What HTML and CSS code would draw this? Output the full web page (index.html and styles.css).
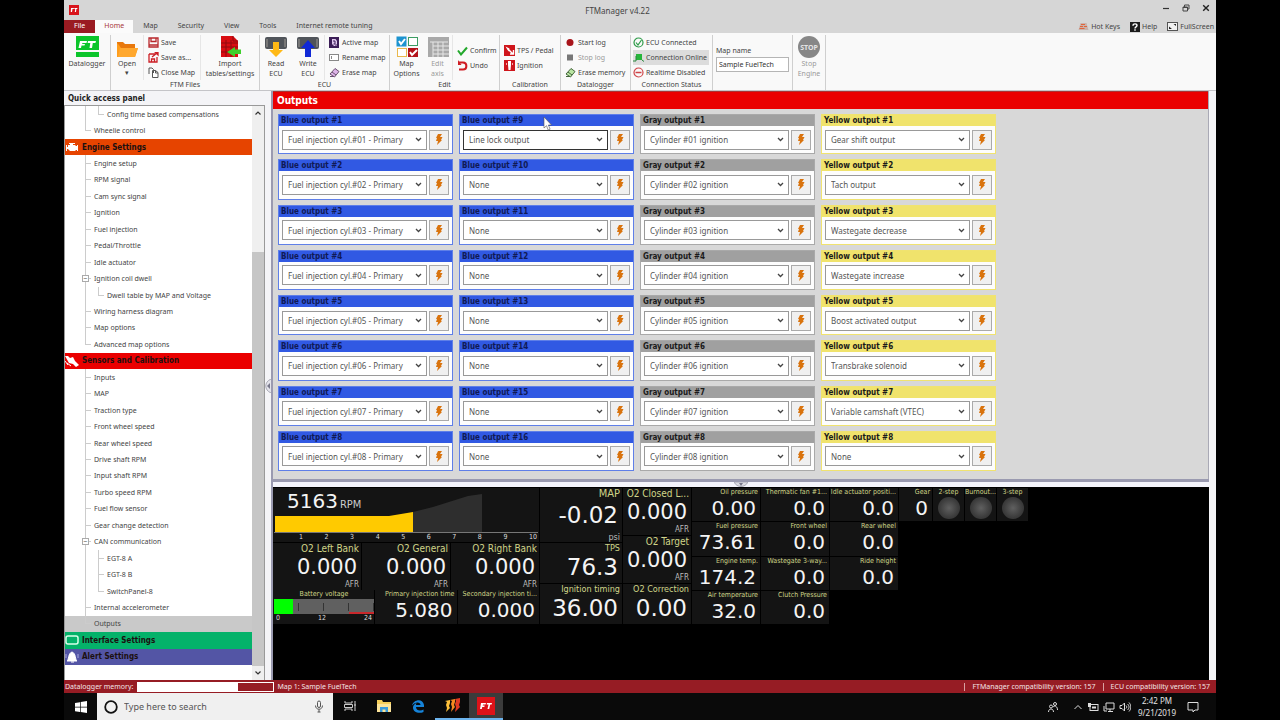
FILE: index.html
```html
<!DOCTYPE html>
<html lang="en">
<head>
<meta charset="UTF-8" />
<meta name="viewport" content="width=device-width, initial-scale=1" />
<title>FTManager v4.22</title>
<link rel="stylesheet" href="styles.css">
</head>
<body>

<div class="window">
  <header class="titlebar">
    <svg class="app-logo" width="10" height="10" viewBox="0 0 10 10"><rect width="10" height="10" fill="#d9141c"/><path d="M2 3h3l-.3 1H3.5L3 7H1.800zM5.500 3h3l-.3 1h-.8L7 7H5.800l.4-3h-1z" fill="#fff"/></svg>
    <h1>FTManager v4.22</h1>
    <div class="window-buttons">
      <button aria-label="Minimize"><svg width="8" height="8" viewBox="0 0 8 8"><path d="M1 4.500h6" stroke="#333" stroke-width="1.200"/></svg></button>
      <button aria-label="Restore"><svg width="8" height="8" viewBox="0 0 8 8" fill="none" stroke="#444"><path d="M1 3h4.500v4H1zM2.500 3V1h4.500v4H5.500M1 3.500h4.500"/></svg></button>
      <button aria-label="Close"><svg width="8" height="8" viewBox="0 0 8 8"><path d="M1.200 1.200l5.600 5.600M6.800 1.200L1.200 6.800" stroke="#222" stroke-width="1.400"/></svg></button>
    </div>
  </header>

  <nav class="tabs">
    <a href="#" class="tab file">File</a>
    <a href="#" class="tab active">Home</a>
    <a href="#" class="tab">Map</a>
    <a href="#" class="tab">Security</a>
    <a href="#" class="tab">View</a>
    <a href="#" class="tab">Tools</a>
    <a href="#" class="tab">Internet remote tuning</a>
    <div class="tools">
      <a href="#"><svg width="11" height="9" viewBox="0 0 11 9"><path d="M2.500 1h6l2 7h-10z" fill="#c9b3ac"/><path d="M3 2.500h4M2 4.500h3M6 4.500h3M1.500 6.500h5" stroke="#e0653c" stroke-width="1.200"/></svg>Hot Keys</a>
      <a href="#"><svg width="10" height="10" viewBox="0 0 10 10"><rect width="10" height="10" fill="#1b1b1b"/><path d="M3 3.800c0-2.600 4-2.400 4-.2C7 5 5 4.800 5 6.500M5 7.300v1.400" stroke="#fff" stroke-width="1.400" fill="none"/></svg>Help</a>
      <a href="#"><svg width="11" height="9" viewBox="0 0 11 9"><rect x=".5" y=".5" width="10" height="8" fill="#f2f2f2" stroke="#555"/><path d="M2 7h3L2 4.500zM9 2H6.500L9 4z" fill="#222"/></svg>FullScreen</a>
    </div>
  </nav>

  <section class="ribbon">
    <div class="group g-datalogger">
      <div class="items">
        <button class="big"><svg width="24" height="24" viewBox="0 0 24 24"><rect x="1" y="1" width="23" height="14" fill="#0cc52b"/><rect x="1" y="17" width="23" height="5" fill="#0cc52b"/><path d="M5 6h7l-.5 2H7.500L7 9h3l-.5 1.500H6.500L6 13H3.500zM13 6h8l-.6 2h-2.600L17 13h-2.500l.8-5h-2.700z" fill="#fff"/></svg><span>Datalogger</span></button>
      </div>
    </div>

    <div class="group g-files">
      <div class="items">
        <button class="big"><svg width="24" height="24" viewBox="0 0 24 24"><path d="M2 7h6l2 2h10v4H2z" fill="#e8780c"/><path d="M2 22V8l2 2 2 3h17l-3 9z" fill="#ff9d1c"/><path d="M5 13h18l-3 9H3z" fill="#ffa82f"/></svg><span>Open</span><small>▾</small></button>
        <div class="stack">
          <button><svg width="11" height="11" viewBox="0 0 11 11" fill="none" stroke="#b8282c"><path d="M1 1h9v9H1zM3 1v3.500h5V1M1 8h9" stroke-width="1.300"/></svg>Save</button>
          <button><svg width="11" height="11" viewBox="0 0 11 11" fill="none" stroke="#cc1f26" stroke-width="1.300"><path d="M1 2h7M1 2v8h8V5M3.500 10V7h3v3M4 5l5-4"/><path d="M7 0h3v3z" fill="#cc1f26"/></svg>Save as...</button>
          <button><svg width="11" height="11" viewBox="0 0 11 11" fill="#fff" stroke="#555"><path d="M1 1h3l1.500 1.500V6M1 1v6M4.500 3.500h3l2.500 2v5H4.500zM7.500 3.500V6H10"/></svg>Close Map</button>
        </div>
        <button class="big"><svg width="24" height="24" viewBox="0 0 24 24"><path d="M3 1h12l5 5v16H3z" fill="#d90d12"/><path d="M15 1v5h5M3 8h17M3 12h17M3 17h17M8 5v17M13 5v17" stroke="#8f0a0e" fill="none"/><path d="M23 14.500h-6V12l-8 5 8 5v-3h6z" fill="#3fd02c"/></svg><span>Import<br>tables/settings</span></button>
      </div>
      <div class="caption">FTM Files</div>
    </div>

    <div class="group g-ecu">
      <div class="items">
        <button class="big"><svg width="24" height="24" viewBox="0 0 24 24"><rect x="1" y="2" width="22" height="12" rx="2" fill="#50545a"/><path d="M3 4v8M21 4v8" stroke="#777" stroke-width="2"/><path d="M9 7h6v8h4l-7 7-7-7h4z" fill="#ffb916"/></svg><span>Read<br>ECU</span></button>
        <button class="big"><svg width="24" height="24" viewBox="0 0 24 24"><rect x="1" y="2" width="22" height="12" rx="2" fill="#50545a"/><path d="M3 4v8M21 4v8" stroke="#777" stroke-width="2"/><path d="M9 22h6v-9h4l-7-8-7 8h4z" fill="#1029d6"/></svg><span>Write<br>ECU</span></button>
        <div class="stack">
          <button><svg width="11" height="11" viewBox="0 0 11 11"><rect width="10" height="11" fill="#3b1d57"/><path d="M3 2h3.500L8 4v5H5L3 7z" fill="#e0c8ee"/><path d="M4 4h2v3H4.500M7 7v2" stroke="#3b1d57" fill="none"/></svg>Active map</button>
          <button><svg width="11" height="9" viewBox="0 0 11 9" fill="#fff" stroke="#888"><rect x=".5" y="1.500" width="9" height="6"/><path d="M2.500 3v3"/></svg>Rename map</button>
          <button><svg width="11" height="11" viewBox="0 0 11 11"><path d="M1 7l5-5.500 4 3L5.500 10z" fill="#ddb3e8" stroke="#6a5270"/><path d="M3 5l4 3M1 9.500h4" stroke="#6a5270"/></svg>Erase map</button>
        </div>
      </div>
      <div class="caption">ECU</div>
    </div>

    <div class="group g-edit">
      <div class="items">
        <button class="big"><svg width="24" height="24" viewBox="0 0 24 24"><rect x="2" y="2" width="9" height="9" fill="#1c93cf" stroke="#1c93cf"/><rect x="13.500" y="2.500" width="9" height="8" fill="#fff" stroke="#3c9d63"/><rect x="2.500" y="13.500" width="9" height="8" fill="#fff" stroke="#e9b84c"/><rect x="13" y="13" width="10" height="9" fill="#b3121a"/><path d="M4 6l2 3 4-5M15 17l2 3 5-5" stroke="#fff" stroke-width="2" fill="none"/></svg><span>Map<br>Options</span></button>
        <button class="big" disabled><svg width="24" height="24" viewBox="0 0 24 24"><rect x="2" y="2" width="21" height="20" fill="#a9a9a9"/><path d="M4 7h18M7 11h16M7 15h16M7 19h16M7 7v15M12 7v15M17 7v15" stroke="#e6e6e6"/></svg><span>Edit<br>axis</span></button>
        <div class="stack">
          <button><svg width="11" height="11" viewBox="0 0 11 11"><path d="M1 5.500l3 4 6-7" stroke="#23a82c" stroke-width="2" fill="none"/></svg>Confirm</button>
          <button><svg width="11" height="11" viewBox="0 0 11 11"><path d="M2 2.500h4c4.500 0 4.500 7 0 7H2" stroke="#cf1d24" stroke-width="2" fill="none"/><path d="M1 0v5h3.500z" fill="#cf1d24"/></svg>Undo</button>
        </div>
      </div>
      <div class="caption">Edit</div>
    </div>

    <div class="group g-calibration">
      <div class="items">
        <div class="stack">
          <button><svg width="11" height="11" viewBox="0 0 11 11"><rect width="11" height="11" fill="#cf151b"/><path d="M1.500 1.500l4 2-1 3z" fill="#fff"/><path d="M4 4l5 5M6 9h3.500V5" stroke="#fff" stroke-width="1.400" fill="none"/></svg>TPS / Pedal</button>
          <button><svg width="11" height="11" viewBox="0 0 11 11"><rect width="11" height="11" fill="#cf151b"/><path d="M4 1h3v4l-.5 5h-2L4 5z" fill="#fff"/><path d="M2.500 3v2M8.500 3v2" stroke="#f3a9ab"/></svg>Ignition</button>
        </div>
      </div>
      <div class="caption">Calibration</div>
    </div>

    <div class="group g-log">
      <div class="items">
        <div class="stack">
          <button><svg width="11" height="11" viewBox="0 0 11 11"><circle cx="5" cy="5.500" r="3.500" fill="#a8141a"/></svg>Start log</button>
          <button disabled><svg width="11" height="11" viewBox="0 0 11 11"><rect x="2" y="2.500" width="6" height="6" fill="#777"/></svg>Stop log</button>
          <button><svg width="11" height="11" viewBox="0 0 11 11"><path d="M1 7l5-5.500 4 3L5.500 10z" fill="#b9e5a3" stroke="#44663b"/><path d="M3 5l4 3M1 9.500h4" stroke="#44663b"/></svg>Erase memory</button>
        </div>
      </div>
      <div class="caption">Datalogger</div>
    </div>

    <div class="group g-status">
      <div class="items">
        <div class="stack">
          <button><svg width="11" height="11" viewBox="0 0 11 11" fill="none" stroke="#2b9a46"><circle cx="5.500" cy="5.500" r="4.500" stroke-width="1.200"/><path d="M3 5.500l2 2.500 3.500-5" stroke-width="1.200"/></svg>ECU Connected</button>
          <button class="pressed"><svg width="11" height="9" viewBox="0 0 11 9"><path d="M3 1h6v6H3z" fill="#27b53c"/><path d="M0 8h3V3M9 7l2 1.500" stroke="#27863a" fill="none"/></svg>Connection Online</button>
          <button><svg width="11" height="11" viewBox="0 0 11 11" fill="none" stroke="#cf4448"><circle cx="5.500" cy="5.500" r="4.500" stroke-width="1.200"/><path d="M2.500 5.500h6" stroke-width="1.500"/></svg>Realtime Disabled</button>
        </div>
      </div>
      <div class="caption">Connection Status</div>
    </div>

    <div class="group g-map">
      <label for="mapName">Map name</label>
      <input type="text" id="mapName" value="Sample FuelTech">
    </div>

    <div class="group g-stop">
      <div class="items">
        <button class="big" disabled><svg width="24" height="24" viewBox="0 0 24 24"><circle cx="12" cy="12" r="11" fill="#878787"/><text x="12" y="15" class="stop-text">STOP</text></svg><span>Stop<br>Engine</span></button>
      </div>
    </div>
  </section>

  <main class="workspace">
    <aside class="sidebar">
      <h2>Quick access panel</h2>
      <div class="tree-box">
        <ul class="tree">
          <li class="sub last more"><a href="#">Config time based compensations</a></li>
          <li class="last"><a href="#">Wheelie control</a></li>
          <li class="section engine"><svg width="14" height="12" viewBox="0 0 14 12"><path d="M1 4h1v2h1V4h2V3H4V2h6v1H8v1h2l1 1h1V4h1v6h-1V9h-1l-1 1H5L3 8H2v2H1z" fill="#fff"/></svg><a href="#">Engine Settings</a></li>
          <li><a href="#">Engine setup</a></li>
          <li><a href="#">RPM signal</a></li>
          <li><a href="#">Cam sync signal</a></li>
          <li><a href="#">Ignition</a></li>
          <li><a href="#">Fuel injection</a></li>
          <li><a href="#">Pedal/Throttle</a></li>
          <li><a href="#">Idle actuator</a></li>
          <li class="open"><a href="#">Ignition coil dwell</a></li>
          <li class="sub last more"><a href="#">Dwell table by MAP and Voltage</a></li>
          <li><a href="#">Wiring harness diagram</a></li>
          <li><a href="#">Map options</a></li>
          <li class="last"><a href="#">Advanced map options</a></li>
          <li class="section sensors"><svg width="14" height="12" viewBox="0 0 14 12"><path d="M0 1h3l2 2 3-1 2 4 4 4-3 2-3-3-4-1z" fill="#fff"/><path d="M0 6l3 4M2 8l4 3" stroke="#fff"/></svg><a href="#">Sensors and Calibration</a></li>
          <li><a href="#">Inputs</a></li>
          <li><a href="#">MAP</a></li>
          <li><a href="#">Traction type</a></li>
          <li><a href="#">Front wheel speed</a></li>
          <li><a href="#">Rear wheel speed</a></li>
          <li><a href="#">Drive shaft RPM</a></li>
          <li><a href="#">Input shaft RPM</a></li>
          <li><a href="#">Turbo speed RPM</a></li>
          <li><a href="#">Fuel flow sensor</a></li>
          <li><a href="#">Gear change detection</a></li>
          <li class="open"><a href="#">CAN communication</a></li>
          <li class="sub more"><a href="#">EGT-8 A</a></li>
          <li class="sub more"><a href="#">EGT-8 B</a></li>
          <li class="sub last more"><a href="#">SwitchPanel-8</a></li>
          <li><a href="#">Internal accelerometer</a></li>
          <li class="last selected"><a href="#">Outputs</a></li>
          <li class="section interface"><svg width="14" height="12" viewBox="0 0 14 12"><rect x="1" y="2" width="12" height="8" rx="2" fill="none" stroke="#d8ffe9" stroke-width="1.500"/></svg><a href="#">Interface Settings</a></li>
          <li class="section alert"><svg width="14" height="12" viewBox="0 0 14 12"><path d="M2 10c2-1 1-8 5-9 4 1 3 8 5 9zM6 11h3" fill="#fff" stroke="#fff"/><path d="M1 3v4M13 3v4" stroke="#a9a9e0"/></svg><a href="#">Alert Settings</a></li>
        </ul>
        <div class="scrollbar">
          <svg width="8" height="6" viewBox="0 0 8 6"><path d="M1.500 4.500L4 2l2.500 2.500" fill="none" stroke="#333" stroke-width="1.200"/></svg>
          <div class="thumb"></div>
          <svg width="8" height="6" viewBox="0 0 8 6"><path d="M1.500 1.500L4 4l2.500-2.500" fill="none" stroke="#333" stroke-width="1.200"/></svg>
        </div>
      </div>
    </aside>
    <div class="splitter"><svg width="6" height="14" viewBox="0 0 6 14"><path d="M6 0C-1 3-1 11 6 14" fill="#e3e3ea" stroke="#a9a9b5"/><path d="M5 4L2 7l3 3z" fill="#77778a"/></svg></div>

    <div class="content">
      <section class="outputs">
        <h2>Outputs</h2>
        <div class="outputs-grid" id="outputs"></div>
        <svg class="cursor" width="9" height="15" viewBox="0 0 9 15"><path d="M1 1v11l2.500-2.300L5.200 14l1.900-.8L5.400 9H8.500z" fill="#fff" stroke="#555" stroke-width=".6"/></svg>
      </section>
      <div class="hsplit"><svg width="14" height="5" viewBox="0 0 14 5"><path d="M0 0c3 6 11 6 14 0z" fill="#dcdce2" stroke="#a9a9b5"/><path d="M5 1h4L7 4z" fill="#77778a"/></svg></div>

      <section class="dash">
        <div class="col col-main">
          <div class="tile rpm">
            <div class="rpm-value"><strong>5163</strong><span>RPM</span></div>
            <svg class="rpm-graph" viewBox="0 0 266 54" preserveAspectRatio="none"><path d="M140 24L160 19 195 8 209 6v38h-69z" fill="#2e2e2e"/><path d="M2 28h114l24-4v20H2z" fill="#ffca00"/><path d="M1 44.500h264" stroke="#777"/></svg>
            <div class="scale"><span>1</span><span>2</span><span>3</span><span>4</span><span>5</span><span>6</span><span>7</span><span>8</span><span>9</span><span>10</span></div>
          </div>
          <div class="row three">
            <div class="tile mid"><h3>O2 Left Bank</h3><b>0.000</b><i>AFR</i></div>
            <div class="tile mid"><h3>O2 General</h3><b>0.000</b><i>AFR</i></div>
            <div class="tile mid"><h3>O2 Right Bank</h3><b>0.000</b><i>AFR</i></div>
          </div>
          <div class="row battery-row">
            <div class="tile battery">
              <h3>Battery voltage</h3>
              <div class="gauge"><div class="level" style="width: 19%"></div></div>
              <div class="ends"><span>0</span><span>12</span><span>24</span></div>
            </div>
            <div class="tile small"><h3>Primary injection time</h3><b>5.080</b></div>
            <div class="tile small"><h3>Secondary injection ti...</h3><b>0.000</b></div>
          </div>
        </div>
        <div class="col col-map">
          <div class="tile large"><h3>MAP</h3><b>-0.02</b><i>psi</i></div>
          <div class="tile large tps"><h3>TPS</h3><b>76.3</b></div>
          <div class="tile large timing"><h3>Ignition timing</h3><b>36.00</b></div>
        </div>
        <div class="col col-o2">
          <div class="tile mid"><h3>O2 Closed L...</h3><b>0.000</b><i>AFR</i></div>
          <div class="tile mid"><h3>O2 Target</h3><b>0.000</b><i>AFR</i></div>
          <div class="tile large timing"><h3>O2 Correction</h3><b>0.00</b></div>
        </div>
        <div class="col col-small">
          <div class="tile small"><h3>Oil pressure</h3><b>0.00</b></div>
          <div class="tile small"><h3>Fuel pressure</h3><b>73.61</b></div>
          <div class="tile small"><h3>Engine temp.</h3><b>174.2</b></div>
          <div class="tile small"><h3>Air temperature</h3><b>32.0</b></div>
        </div>
        <div class="col col-small">
          <div class="tile small"><h3>Thermatic fan #1...</h3><b>0.0</b></div>
          <div class="tile small"><h3>Front wheel</h3><b>0.0</b></div>
          <div class="tile small"><h3>Wastegate 3-way...</h3><b>0.0</b></div>
          <div class="tile small"><h3>Clutch Pressure</h3><b>0.0</b></div>
        </div>
        <div class="col col-small">
          <div class="tile small"><h3>Idle actuator positi...</h3><b>0.0</b></div>
          <div class="tile small"><h3>Rear wheel</h3><b>0.0</b></div>
          <div class="tile small"><h3>Ride height</h3><b>0.0</b></div>
        </div>
        <div class="col col-small col-gear"><div class="tile small"><h3>Gear</h3><b>0</b></div></div>
        <div class="col col-small col-lamp"><div class="tile small lamp"><h3>2-step</h3><div class="led"></div></div></div>
        <div class="col col-small col-lamp"><div class="tile small lamp"><h3>Burnout...</h3><div class="led"></div></div></div>
        <div class="col col-small col-lamp"><div class="tile small lamp"><h3>3-step</h3><div class="led"></div></div></div>
      </section>
    </div>
  </main>

  <footer class="statusbar">
    <label for="memory">Datalogger memory:</label>
    <progress id="memory" value="74" max="100"></progress>
    <span>Map 1: Sample FuelTech</span>
    <span class="version">FTManager compatibility version: 157</span>
    <span class="version">ECU compatibility version: 157</span>
  </footer>

  <div class="taskbar">
    <button class="start" aria-label="Start"><svg width="12" height="12" viewBox="0 0 12 12" fill="#fff"><path d="M0 2l5-.8v4.500H0zM5.700 1L12 0v5.700H5.700zM0 6.400h5v4.500L0 10.200zM5.700 6.400H12V12l-6.300-1z"/></svg></button>
    <div class="search">
      <svg width="14" height="14" viewBox="0 0 14 14"><circle cx="7" cy="7" r="5.800" fill="none" stroke="#111" stroke-width="1.800"/></svg>
      <input type="text" aria-label="Search" placeholder="Type here to search">
      <svg width="10" height="13" viewBox="0 0 10 13" fill="none" stroke="#555"><rect x="3.500" y="1" width="3" height="6.500" rx="1.500"/><path d="M1.500 5.500c0 5 7 5 7 0M5 9.500V12M3.500 12h3"/></svg>
    </div>
    <button class="app" aria-label="Task view"><svg width="14" height="12" viewBox="0 0 14 12" fill="none" stroke="#ccc"><path d="M2 1v2h7V1M2 11V9h7v2M1.500 4.500h8v3h-8zM12 1v10M11 5h2"/></svg></button>
    <button class="app" aria-label="File Explorer"><svg width="16" height="14" viewBox="0 0 16 14"><path d="M1 1h5l1 2h8v10H1z" fill="#f5cf5b"/><path d="M1 5h14v8H1z" fill="#fce49a"/><path d="M4 13V8h8v5h-2.500v-2.500h-3V13z" fill="#3a9bdc"/></svg></button>
    <button class="app" aria-label="Edge"><svg width="14" height="14" viewBox="0 0 14 14"><path d="M1 6.500C2 .5 12-1.500 13 6v2H5c0 4 5 4 7.500 2.500V13C8 15 2 13.500 2 8.500 2 6.500 3.500 5 5.500 4 5 5 5 5.500 5 6h4.500C9.500 2.500 4 2.500 1 6.500z" fill="#1683d8"/></svg></button>
    <button class="app running" aria-label="FuelTech"><svg width="16" height="16" viewBox="0 0 16 16"><path d="M1 3l5-1v3L5 8l1 2-4 4 1-4-1-3 1-3z" fill="#ffc13b"/><path d="M6 2l5-1v3l-1 3 1 2-4 5 1-5-1-3 1-3z" fill="#f78a20"/><path d="M11 1l5-1v4l-1 3 1 2-5 5 1-5-1-3 1-3z" fill="#e13a22"/></svg></button>
    <button class="app running current" aria-label="FTManager"><svg width="18" height="18" viewBox="0 0 18 18"><rect width="18" height="18" fill="#dd1219"/><path d="M4 6h5l-.4 1.500H6l-.3 1h2l-.4 1.500H5.200L4.800 12H3zM10 6h5l-.4 1.500h-1.400l-1 4.500h-1.700l1-4.500H9.700z" fill="#fff"/></svg></button>
    <div class="tray">
      <svg width="12" height="12" viewBox="0 0 12 12" fill="none" stroke="#ddd"><circle cx="8" cy="3" r="1.500"/><circle cx="4" cy="5.500" r="1.500"/><path d="M1.500 11c0-4 5-4 5 0M6 6c2-2 4.500-.5 4.500 3"/></svg>
      <svg class="up" width="10" height="10" viewBox="0 0 10 10" fill="none" stroke="#ddd"><path d="M1.500 7L5 3.500 8.500 7"/></svg>
      <svg width="12" height="12" viewBox="0 0 12 12"><rect x="3" y="3.500" width="8" height="6" fill="none" stroke="#ddd"/><path d="M5 5.500h4v2H5zM1 2h3v4H1z" fill="#ddd"/></svg>
      <svg width="12" height="12" viewBox="0 0 12 12" fill="none" stroke="#ddd"><path d="M3 2h8v6H3zM5 10.500h5M7 8v2M1 5v5h3"/></svg>
      <svg width="12" height="12" viewBox="0 0 12 12" fill="none" stroke="#ddd"><path d="M1 4.500h2L5.500 2v8L3 7.500H1zM7 4.500c1 1 1 2 0 3M8.500 3c2 2 2 4 0 6M10 1.500c2.500 3 2.500 6 0 9"/></svg>
      <div class="clock">2:42 PM<br>9/21/2019</div>
      <svg width="12" height="12" viewBox="0 0 12 12" fill="none" stroke="#ddd"><path d="M1 1.500h10v7.500H8L6 11V9H1z"/></svg>
    </div>
  </div>
</div>

<script src="script.js"></script>
</body>
</html>
```
FILE: script.js
```js
const columns = [
  { color: 'blue', name: 'Blue', first: 1, values: [1, 2, 3, 4, 5, 6, 7, 8].map(n => `Fuel injection cyl.#0${n} - Primary`) },
  { color: 'blue', name: 'Blue', first: 9, values: ['Line lock output', 'None', 'None', 'None', 'None', 'None', 'None', 'None'] },
  { color: 'gray', name: 'Gray', first: 1, values: [1, 2, 3, 4, 5, 6, 7, 8].map(n => `Cylinder #0${n} ignition`) },
  { color: 'yellow', name: 'Yellow', first: 1, values: [
    'Gear shift output', 'Tach output', 'Wastegate decrease', 'Wastegate increase',
    'Boost activated output', 'Transbrake solenoid', 'Variable camshaft (VTEC)', 'None'
  ] }
];

const bolt = '<svg width="8" height="11" viewBox="0 0 8 11"><path d="M3 0h4L5 3h2.500L6 6h1L2 11l1-4H1l1-3H1z" fill="#d9730d"/></svg>';
const grid = document.getElementById('outputs');

columns.forEach(col => {
  col.values.forEach((value, i) => {
    const number = col.first + i;
    const id = `${col.color}${number}`;
    const box = document.createElement('div');
    box.className = `output ${col.color}`;
    box.innerHTML = `
      <label for="${id}">${col.name} output #${number}</label>
      <div class="output-row">
        <select id="${id}"><option>${value}</option></select>
        <button aria-label="Test ${col.name} output #${number}">${bolt}</button>
      </div>`;
    grid.appendChild(box);
  });
});

document.getElementById('blue9').classList.add('focused');
```
FILE: styles.css
```css
* {
  box-sizing: border-box;
}

body {
  margin: 0;
  padding: 0 5%;
  background: #000;
  font-family: "Noto Sans", sans-serif;
  font-size: 7px;
  color: #444;
}

h1, h2, h3, ul {
  margin: 0;
  padding: 0;
  font-weight: normal;
}

a {
  color: inherit;
  text-decoration: none;
}

button {
  font: inherit;
  color: inherit;
  background: none;
  border: none;
  padding: 0;
}

svg {
  display: block;
  flex: none;
}

.window {
  display: flex;
  flex-direction: column;
  height: 100vh;
  background: #f4f4f7;
}

/* title bar and tabs */
.titlebar {
  display: flex;
  align-items: center;
  height: 20px;
  padding-left: 5px;
  background: #d6d6d6;
}

.titlebar h1 {
  flex: 1;
  text-align: center;
  font-size: 8px;
}

.window-buttons {
  display: flex;
  align-self: flex-start;
}

.window-buttons button {
  width: 20px;
  height: 15px;
  display: flex;
  align-items: center;
  justify-content: center;
}

.tabs {
  display: flex;
  height: 13px;
  line-height: 12px;
  background: #d6d6d6;
}

.tab {
  padding: 0 10px;
}

.tab.file {
  background: #9a1b22;
  color: #fff;
}

.tab.active {
  padding: 0 9px;
  background: #fbfbfb;
  color: #a8383c;
}

.tools {
  display: flex;
  gap: 10px;
  margin-left: auto;
  padding-right: 2px;
}

.tools a {
  display: flex;
  align-items: center;
  gap: 2px;
}

/* ribbon */
.ribbon {
  display: flex;
  height: 58px;
  padding-top: 2px;
  background: #f9f9f9;
  border-bottom: 1px solid #c4c4c8;
}

.group {
  display: flex;
  flex-direction: column;
  border-right: 1px solid #cfcfcf;
}

.items {
  flex: none;
  display: grid;
  height: 45px;
}

.caption {
  text-align: center;
  line-height: 10px;
}

.g-datalogger { width: 47px; }
.g-files { width: 149px; }
.g-ecu { width: 130px; }
.g-edit { width: 110px; }
.g-calibration { width: 61px; }
.g-log { width: 70px; }
.g-status { width: 82px; }
.g-map { width: 80px; }
.g-stop { width: 33px; }

.g-files .items { grid-template-columns: 32px 58px 58px; }
.g-ecu .items { grid-template-columns: 32px 32px 65px; }
.g-edit .items { grid-template-columns: 33px 29px 47px; }

.big {
  display: flex;
  flex-direction: column;
  align-items: center;
  line-height: 10px;
}

.big small {
  font-size: 7px;
  line-height: 8px;
}

button:disabled {
  color: #999;
}

.stack {
  display: flex;
  flex-direction: column;
  justify-content: center;
  padding-left: 4px;
  white-space: nowrap;
}

.g-files .stack,
.g-ecu .stack,
.g-edit .stack {
  border-left: 1px solid #e6e6e6;
}

.g-files .stack {
  border-right: 1px solid #e6e6e6;
}

.g-status .stack {
  padding: 0 3px 0 2px;
}

.stack button {
  display: flex;
  align-items: center;
  gap: 2px;
  height: 15px;
}

.stack .pressed {
  background: #dcdcdc;
}

.g-map {
  padding: 10px 3px;
}

.g-map label {
  line-height: 12px;
}

.g-map input {
  width: 100%;
  height: 15px;
  padding: 0 2px;
  border: 1px solid #b5b5b5;
  font: inherit;
  color: #333;
}

.stop-text {
  font-size: 7px;
  font-weight: bold;
  fill: #e4e4e4;
  text-anchor: middle;
}

/* workspace */
.workspace {
  display: flex;
  flex: 1;
  min-height: 0;
  padding-right: 7px;
}

.sidebar {
  display: flex;
  flex-direction: column;
  width: 201px;
}

.sidebar h2 {
  padding: 1px 0 0 4px;
  font: bold 8px/13px "DejaVu Sans Condensed", sans-serif;
  color: #222;
}

.tree-box {
  display: flex;
  flex: 1;
  border: 1px solid #999;
  border-bottom: none;
  background: #fff;
}

.tree {
  flex: 1;
  display: grid;
  grid-auto-rows: 1fr;
  margin-bottom: 15px;
  list-style: none;
}

.tree li {
  display: flex;
  align-items: center;
  padding-left: 29px;
  background-image: linear-gradient(#ccc, #ccc), linear-gradient(#ccc, #ccc);
  background-repeat: no-repeat;
  background-size: 1px 100%, 6px 1px;
  background-position: 20px 0, 20px 50%;
}

.tree li.last {
  background-size: 1px 50%, 6px 1px;
}

.tree li.sub {
  padding-left: 42px;
  background-image: linear-gradient(#ccc, #ccc), linear-gradient(#ccc, #ccc), linear-gradient(#ccc, #ccc);
  background-size: 1px 100%, 6px 1px, 1px 100%;
  background-position: 33px 0, 33px 50%, 20px 0;
}

.tree li.sub.last {
  background-size: 1px 50%, 6px 1px, 1px 100%;
}

.tree li.open::before {
  content: "−";
  box-sizing: border-box;
  width: 7px;
  height: 7px;
  margin: 0 5px 0 -12px;
  border: 1px solid #aaa;
  background: #fff;
  font-size: 7px;
  line-height: 5px;
  text-align: center;
}

.tree li.selected {
  background-color: #c9c9c9;
}

.tree li.section {
  gap: 3px;
  padding-left: 0;
  background-image: none;
  font: bold 8px "DejaVu Sans Condensed", sans-serif;
  color: #1c1010;
}

.tree li.engine { background-color: #e64400; }
.tree li.sensors { background-color: #ea0000; }
.tree li.interface { background-color: #04b26a; }
.tree li.alert { background-color: #5355a5; }

.scrollbar {
  display: flex;
  flex-direction: column;
  align-items: center;
  width: 12px;
  padding: 4px 0;
  background: #efefef;
}

.thumb {
  width: 12px;
  height: 414px;
  margin-top: auto;
  margin-bottom: 4px;
  background: #c6c6c6;
}

.splitter {
  display: flex;
  align-items: center;
  width: 8px;
  border-right: 2px solid #9a9ab0;
}

.content {
  display: flex;
  flex: 1;
  flex-direction: column;
  min-width: 0;
}

.outputs {
  position: relative;
  display: flex;
  flex: 1;
  flex-direction: column;
  border-right: 1px solid #a9a9b5;
  background: #d8d8d8;
}

.outputs h2 {
  padding-left: 4px;
  border-top: 1px solid #a33;
  background: #ea0000;
  color: #fff;
  font: bold 10px/17px "DejaVu Sans Condensed", sans-serif;
}

.outputs-grid {
  flex: 1;
  display: grid;
  grid-template-rows: repeat(8, 1fr);
  grid-auto-flow: column;
  grid-auto-columns: 175px;
  gap: 5px 6px;
  padding: 5px 5px 8px;
}

.output {
  display: flex;
  flex-direction: column;
  background: #fdfdfd;
  border: 1px solid;
}

.output.blue { border-color: #5f7fe8; }
.output.gray { border-color: #a9a9a9; }
.output.yellow { border-color: #f0e370; }

.output label {
  padding-left: 2px;
  font: bold 8px/11px "DejaVu Sans Condensed", sans-serif;
  color: #1a1a1a;
}

.blue label {
  background: #3159e3;
  color: #101a55;
}

.gray label { background: #a0a0a0; }
.yellow label { background: #f0e36c; }

.output-row {
  display: flex;
  flex: 1;
  align-items: center;
  gap: 2px;
  padding: 0 3px;
}

.output select {
  flex: 1;
  min-width: 0;
  height: 20px;
  padding: 0 5px;
  border: 1px solid #999;
  border-radius: 0;
  appearance: none;
  font: 8px "Noto Sans", sans-serif;
  color: #555;
  background: #fff url("data:image/svg+xml,%3Csvg xmlns='http://www.w3.org/2000/svg' width='7' height='5'%3E%3Cpath d='M1 1l2.500 2.500L6 1' fill='none' stroke='%23444' stroke-width='1.300'/%3E%3C/svg%3E") no-repeat right 4px center;
}

.output select.focused {
  border-color: #333;
}

.output button {
  display: flex;
  align-items: center;
  justify-content: center;
  width: 20px;
  height: 20px;
  border: 1px solid #aaa;
  background: #f0f0f0;
}

.cursor {
  position: absolute;
  left: 270px;
  top: 25px;
}

.hsplit {
  display: flex;
  justify-content: center;
  height: 8px;
  border-top: 3px solid #9a9ab0;
  background: #f4f4fb;
}

/* dashboard */
.dash {
  display: flex;
  align-items: flex-start;
  gap: 1px;
  height: 193px;
  padding-top: 1px;
  background: #000;
  font-family: "DejaVu Sans Condensed", sans-serif;
}

.col {
  display: grid;
  gap: 1px;
  height: 136px;
}

.col-main { width: 266px; grid-template-rows: 54px 46px 34px; }
.col-map { width: 82px; grid-template-rows: 54px 40px 40px; }
.col-o2 { width: 68px; grid-template-rows: 47px 47px 40px; }
.col-small { width: 68px; grid-template-rows: repeat(4, 1fr); }
.col-gear { width: 33px; }
.col-lamp { width: 31px; }

.row {
  display: grid;
  gap: 1px;
}

.three { grid-template-columns: repeat(3, 1fr); }
.battery-row { grid-template-columns: 101px 1fr 1fr; }

.tile {
  display: flex;
  flex-direction: column;
  align-items: flex-end;
  padding-right: 2px;
  background: #141414;
  white-space: nowrap;
}

.tile h3 {
  font-size: 10px;
  line-height: 12px;
  color: #d0d488;
}

.tile b {
  padding-right: 2px;
  font: 21px/25px "DejaVu Sans", sans-serif;
  color: #f4f4f4;
}

.tile i {
  margin-top: auto;
  font-size: 8px;
  line-height: 10px;
  font-style: normal;
  color: #bbb;
}

.large h3 { font-size: 11px; }
.large b { font-size: 23px; line-height: 30px; }
.large i { font-size: 9px; }

.timing h3,
.tps h3 {
  font-size: 9px;
  line-height: 11px;
}

.timing b,
.tps b {
  line-height: 26px;
}

.small h3,
.battery h3 {
  font-size: 7px;
  line-height: 9px;
}

.small b {
  font-size: 20px;
  line-height: 22px;
}

.lamp {
  align-items: center;
  padding-right: 0;
}

.led {
  width: 22px;
  height: 22px;
  border-radius: 50%;
  background: radial-gradient(#606060, #3c3c3c 60%, #2c2c2c);
}

/* graph and readout share one cell */
.rpm {
  display: grid;
  grid-template-rows: 45px 9px;
  align-items: start;
  padding: 0;
}

.rpm-graph {
  grid-area: 1 / 1 / 3 / 2;
  width: 100%;
  height: 54px;
}

.rpm-value {
  grid-area: 1 / 1;
  z-index: 1;
  display: flex;
  align-items: baseline;
  gap: 2px;
  padding-left: 14px;
  color: #f4f4f4;
}

.rpm-value strong {
  font: 20px/27px "DejaVu Sans", sans-serif;
}

.rpm-value span {
  font-size: 11px;
  color: #ccc;
}

.scale {
  grid-area: 2 / 1;
  display: flex;
  justify-content: space-between;
  padding: 0 2px 0 26px;
  font-size: 7px;
  line-height: 9px;
  color: #ddd;
}

.battery {
  align-items: stretch;
  padding: 0 0 0 1px;
}

.battery h3 {
  text-align: center;
}

.gauge {
  height: 15px;
  background: linear-gradient(90deg, transparent 75%, #c8282c 75%) bottom / 100% 2px no-repeat,
    repeating-linear-gradient(90deg, transparent 0 24px, #333 24px 25px) center / 100% 8px no-repeat, #606060;
}

.level {
  height: 15px;
  background: #0f0;
}

.ends {
  display: flex;
  justify-content: space-between;
  padding: 0 2px;
  font-size: 7px;
  line-height: 9px;
  color: #ddd;
}

/* status bar */
.statusbar {
  display: flex;
  align-items: center;
  height: 13px;
  padding: 0 6px 0 1px;
  background: #961c24;
  color: #f3e4e4;
  white-space: nowrap;
}

progress {
  width: 137px;
  height: 10px;
  margin: 0 3px 0 4px;
  border: 1px solid #fff;
  appearance: none;
}

progress::-webkit-progress-bar { background: #961c24; }
progress::-webkit-progress-value { background: #fff; }

.version {
  margin-left: 7px;
  padding-left: 7px;
  border-left: 1px solid #d8a0a0;
  line-height: 8px;
}

.statusbar span:nth-of-type(2) {
  margin-left: auto;
}

/* taskbar */
.taskbar {
  display: flex;
  height: 27px;
  background: #0a0a0a;
  color: #e4e4e4;
}

.start {
  display: flex;
  align-items: center;
  justify-content: center;
  width: 33px;
}

.search {
  display: flex;
  align-items: center;
  width: 236px;
  padding: 0 9px 0 7px;
  background: #f0f0f0;
}

.search input {
  flex: 1;
  min-width: 0;
  padding: 0 6px;
  border: none;
  background: none;
  font: 9px "Noto Sans", sans-serif;
}

.search input::placeholder {
  color: #555;
}

.app {
  display: flex;
  align-items: center;
  justify-content: center;
  width: 34px;
  border-bottom: 2px solid transparent;
}

.app.running { border-bottom-color: #6cb4ee; }
.app.current { background: #3b3b3b; }

.tray {
  display: flex;
  align-items: center;
  gap: 4px;
  margin-left: auto;
  padding-right: 17px;
}

.up {
  margin-left: 10px;
}

.clock {
  padding: 0 7px 0 3px;
  font-size: 8px;
  line-height: 12px;
  text-align: center;
}
```
